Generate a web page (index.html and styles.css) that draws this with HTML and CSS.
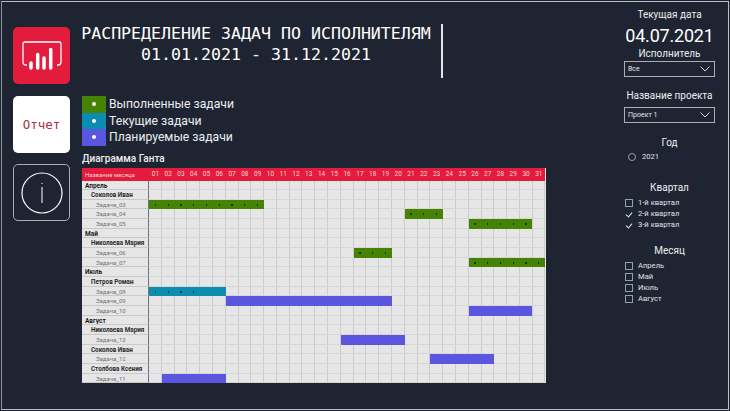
FILE: index.html
```html
<!DOCTYPE html>
<html lang="ru">
<head>
  <meta charset="UTF-8">
  <title>Распределение задач по исполнителям</title>
  <link rel="stylesheet" href="styles.css">
</head>
<body>
  <div class="page">
    <nav class="nav">
      <div class="tile tile-red">
        <svg width="40" height="29" viewBox="0 0 40 29" fill="none" stroke="#fff">
          <path d="M5 24 H4 Q1 24 1 21 V3 Q1 1 3 1 H37 Q39 1 39 3 V21 Q39 24 36 24 H35" stroke-width="1.300"/>
          <path d="M9 22 V27 M15.700 13.500 V27 M22 17 V27 M28.700 8.500 V27" stroke-width="3.500" stroke-linecap="round"/>
        </svg>
      </div>
      <div class="tile tile-white">Отчет</div>
      <div class="tile tile-info">
        <svg width="42" height="42" viewBox="0 0 42 42" fill="none" stroke="#fff">
          <circle cx="21" cy="21" r="20" stroke-width="1.200"/>
          <path d="M21 15 V31" stroke-width="1"/>
          <path d="M21 11 V12" stroke-width="1"/>
        </svg>
      </div>
    </nav>

    <main class="main">
      <header class="title-row">
        <h1 class="title">РАСПРЕДЕЛЕНИЕ ЗАДАЧ ПО ИСПОЛНИТЕЛЯМ<br>01.01.2021 - 31.12.2021</h1>
        <div class="title-rule"></div>
      </header>

      <ul class="legend">
        <li><span class="swatch done"><i></i></span>Выполненные задачи</li>
        <li><span class="swatch current"><i></i></span>Текущие задачи</li>
        <li><span class="swatch planned"><i></i></span>Планируемые задачи</li>
      </ul>

      <h2 class="gantt-title">Диаграмма Ганта</h2>
      <div class="gantt" id="gantt"></div>
    </main>

    <aside class="side">
      <div class="side-label">Текущая дата</div>
      <div class="today">04.07.2021</div>
      <div class="side-label">Исполнитель</div>
      <div class="dropdown">Все<svg width="10" height="6" viewBox="0 0 10 6" fill="none" stroke="#d8d8d8"><path d="M0.500 0.500 L5 5 L9.500 0.500"/></svg></div>
      <div class="side-label project">Название проекта</div>
      <div class="dropdown">Проект 1<svg width="10" height="6" viewBox="0 0 10 6" fill="none" stroke="#d8d8d8"><path d="M0.500 0.500 L5 5 L9.500 0.500"/></svg></div>

      <div class="side-label year">Год</div>
      <div class="option radio-row"><span class="radio"></span>2021</div>

      <div class="side-label quarter">Квартал</div>
      <div class="option"><span class="box"></span>1-й квартал</div>
      <div class="option"><span class="box checked"></span>2-й квартал</div>
      <div class="option"><span class="box checked"></span>3-й квартал</div>

      <div class="side-label month">Месяц</div>
      <div class="option"><span class="box"></span>Апрель</div>
      <div class="option"><span class="box"></span>Май</div>
      <div class="option"><span class="box"></span>Июль</div>
      <div class="option"><span class="box"></span>Август</div>
    </aside>
  </div>

  <script>
    // level: 0 month, 1 person, 2 task; from/to are day columns
    const rows = [
      [0, "Апрель"],
      [1, "Соколов Иван"],
      [2, "Задача_03", "done", 1, 9],
      [2, "Задача_04", "done", 21, 23],
      [2, "Задача_05", "done", 26, 30],
      [0, "Май"],
      [1, "Николаева Мария"],
      [2, "Задача_06", "done", 17, 19],
      [2, "Задача_07", "done", 26, 31],
      [0, "Июль"],
      [1, "Петров Роман"],
      [2, "Задача_08", "current", 1, 6],
      [2, "Задача_09", "planned", 7, 19],
      [2, "Задача_10", "planned", 26, 30],
      [0, "Август"],
      [1, "Николаева Мария"],
      [2, "Задача_13", "planned", 16, 20],
      [1, "Соколов Иван"],
      [2, "Задача_12", "planned", 23, 27],
      [1, "Столбова Ксения"],
      [2, "Задача_11", "planned", 2, 6]
    ];
    const DOT_LIMIT = { current: 4 };
    const gantt = document.getElementById("gantt");
    let html = '<div class="head-name">Название месяца</div>';

    for (let d = 1; d <= 31; d++) {
      html += `<div class="head-day">${String(d).padStart(2, "0")}</div>`;
    }

    rows.forEach((row, i) => {
      const line = i + 2;
      html += `<div class="name level-${row[0]}" style="grid-row:${line}">${row[1]}</div>`;
      html += `<div class="track" style="grid-row:${line}"></div>`;
      if (row[2]) {
        const count = row[4] - row[3] + 1;
        let dots = "";
        if (row[2] !== "planned") {
          for (let k = 0; k < Math.min(count, DOT_LIMIT[row[2]] || count); k++) dots += "<i></i>";
        }
        html += `<div class="bar ${row[2]}" style="grid-row:${line};grid-column:${row[3] + 1}/${row[4] + 2}">${dots}</div>`;
      }
    });
    gantt.innerHTML = html;
  </script>
</body>
</html>
```

FILE: styles.css
```css
* {
  box-sizing: border-box;
}
html, body {
  margin: 0;
  padding: 0;
}
body {
  width: 730px;
  height: 411px;
  overflow: hidden;
  background: #1e2432;
  font-family: Roboto, "Open Sans", sans-serif;
  color: #fff;
}
.page {
  width: 728px;
  height: 409px;
  margin: 1px;
  display: flex;
  border: 1px solid #b9bdc6;
  border-left-color: #8d919b;
}
.nav {
  width: 80px;
  flex: none;
  padding: 25px 0 0 11px;
  display: flex;
  flex-direction: column;
  gap: 11.500px;
}
.tile {
  width: 57px;
  height: 57px;
  border-radius: 5px;
  display: flex;
  align-items: center;
  justify-content: center;
}
.tile-red {
  background: #e31b3c;
}
.tile-white {
  background: #fff;
  color: #a5303f;
  font-family: "DejaVu Sans Mono", monospace;
  font-size: 12.500px;
}
.tile-info {
  border: 1px solid #a9adb5;
}
.main {
  width: 464px;
  flex: none;
}
.title-row {
  height: 57px;
  margin-top: 21px;
  display: flex;
  align-items: flex-start;
}
.title {
  width: 350px;
  margin: 0 0 0 -1px;
  font-family: "DejaVu Sans Mono", monospace;
  font-size: 16.600px;
  font-weight: normal;
  line-height: 21px;
  text-align: center;
  white-space: nowrap;
}
.title-rule {
  width: 2px;
  height: 54px;
  margin: 1px 0 0 10px;
  background: #e4e5e8;
}
.legend {
  list-style: none;
  margin: 16px 0 0;
  padding: 0;
  font-size: 12.200px;
  color: #eceef0;
}
.legend li {
  height: 16.500px;
  display: flex;
  align-items: center;
  white-space: nowrap;
}
.swatch {
  width: 24px;
  height: 16.500px;
  margin-right: 3px;
  display: flex;
  align-items: center;
  justify-content: center;
}
.swatch i {
  width: 4px;
  height: 4px;
  border-radius: 50%;
  background: #fff;
}
.done {
  background: #468304;
}
.current {
  background: #0a8db0;
}
.planned {
  background: #5b56e0;
}
.gantt-title {
  margin: 5px 0 2px;
  font-size: 10px;
  font-weight: 500;
  line-height: 15px;
  color: #f0f0f0;
}
.gantt {
  width: 464px;
  display: grid;
  grid-template-columns: 67px repeat(31, 12.790px);
  grid-template-rows: 13px repeat(21, 9.670px);
  background: #e6e6e6;
}
.head-name, .head-day {
  background: #e31b3c;
  color: #f7d5da;
  line-height: 13px;
  white-space: nowrap;
}
.head-name {
  padding-left: 3px;
  font-size: 6px;
}
.head-day {
  font-size: 6.500px;
  text-align: center;
}
.name {
  grid-column: 1;
  font-size: 6px;
  line-height: 10.500px;
  color: #333;
  border-bottom: 1px solid #c9c9c9;
  border-right: 1px solid #6d7280;
  white-space: nowrap;
  overflow: hidden;
}
.level-0 {
  padding-left: 3px;
  font-size: 6.500px;
  font-weight: 700;
  color: #1c1c1c;
}
.level-1 {
  padding-left: 9px;
  font-size: 6.300px;
  font-weight: 700;
  color: #2a2a2a;
}
.level-2 {
  padding-left: 14px;
  color: #707070;
}
.track {
  grid-column: 2 / -1;
  border-bottom: 1px solid #d6d6d6;
  background: repeating-linear-gradient(to right, transparent 0, transparent 11.790px, #cbcbcb 11.790px, #cbcbcb 12.790px);
}
.bar {
  display: flex;
  align-items: center;
  justify-content: flex-start;
  z-index: 1;
}
.bar i {
  flex: 0 0 12.790px;
  height: 2px;
  background: radial-gradient(circle, #0c3a02 0, #0c3a02 1px, transparent 1px);
}
.side {
  width: 91px;
  margin-left: 78px;
  flex: none;
  padding-top: 5px;
  display: flex;
  flex-direction: column;
}
.side-label {
  width: 91px;
  text-align: center;
  font-size: 10px;
  line-height: 15px;
  color: #eceef0;
  white-space: nowrap;
}
.today {
  text-align: center;
  font-size: 18px;
  letter-spacing: -0.200px;
  line-height: 24px;
  margin-top: 2px;
  margin-bottom: -2px;
}
.dropdown {
  height: 16px;
  border: 1px solid #a9adb5;
  padding: 0 4px 0 3px;
  display: flex;
  align-items: center;
  justify-content: space-between;
  font-size: 7px;
  color: #e6e6e6;
}
.project {
  margin-top: 11px;
  margin-bottom: 4px;
}
.year {
  margin-top: 12px;
  margin-bottom: 1px;
}
.quarter {
  margin-top: 18px;
  margin-bottom: 2px;
}
.month {
  margin-top: 13px;
  margin-bottom: 2px;
}
.option {
  height: 11px;
  display: flex;
  align-items: center;
  color: #e0e2e6;
  font-size: 7.600px;
  white-space: nowrap;
}
.radio {
  width: 8px;
  height: 8px;
  margin: 0 6px 0 4px;
  border: 1px solid #9a9ea8;
  border-radius: 50%;
}
.box {
  position: relative;
  width: 8px;
  height: 8px;
  margin: 0 5px 0 1px;
  border: 1px solid #9a9ea8;
}
.box.checked {
  border-color: transparent;
}
.box.checked::after {
  content: "";
  position: absolute;
  left: 1px;
  top: 0;
  width: 3px;
  height: 5px;
  border-right: 1px solid #e6e6e6;
  border-bottom: 1px solid #e6e6e6;
  transform: rotate(40deg);
}
```
